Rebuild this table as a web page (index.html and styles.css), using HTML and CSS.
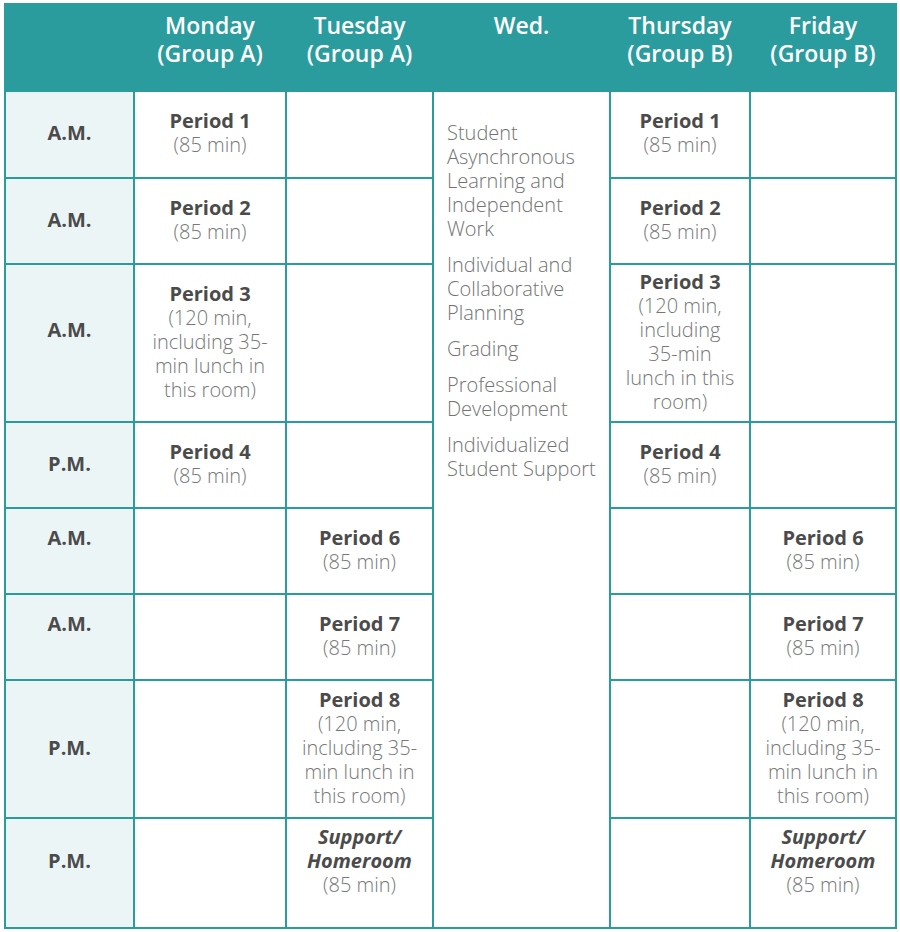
FILE: index.html
```html
<!DOCTYPE html>
<html lang="en">
<head>
<meta charset="utf-8">
<title>Hybrid Schedule</title>
<link rel="stylesheet" href="styles.css">
</head>
<body>
<div class="schedule">
  <div class="head"></div>
  <div class="head">Monday<br>(Group A)</div>
  <div class="head">Tuesday<br>(Group A)</div>
  <div class="head">Wed.</div>
  <div class="head">Thursday<br>(Group B)</div>
  <div class="head">Friday<br>(Group B)</div>

  <!-- row 1 -->
  <div class="label">A.M.</div>
  <div class="cell"><b>Period 1</b><span>(85 min)</span></div>
  <div class="cell"></div>
  <div class="wed">
    <p>Student<br>Asynchronous<br>Learning and<br>Independent<br>Work</p>
    <p>Individual and<br>Collaborative<br>Planning</p>
    <p>Grading</p>
    <p>Professional<br>Development</p>
    <p>Individualized<br>Student Support</p>
  </div>
  <div class="cell"><b>Period 1</b><span>(85 min)</span></div>
  <div class="cell"></div>

  <!-- row 2 -->
  <div class="label">A.M.</div>
  <div class="cell"><b>Period 2</b><span>(85 min)</span></div>
  <div class="cell"></div>
  <div class="cell"><b>Period 2</b><span>(85 min)</span></div>
  <div class="cell"></div>

  <!-- row 3 -->
  <div class="label lift">A.M.</div>
  <div class="cell"><b>Period 3</b><span>(120 min,<br>including 35-<br>min lunch in<br>this room)</span></div>
  <div class="cell"></div>
  <div class="cell"><b>Period 3</b><span>(120 min,<br>including<br>35-min<br>lunch in this<br>room)</span></div>
  <div class="cell"></div>

  <!-- row 4 -->
  <div class="label">P.M.</div>
  <div class="cell"><b>Period 4</b><span>(85 min)</span></div>
  <div class="cell"></div>
  <div class="cell"><b>Period 4</b><span>(85 min)</span></div>
  <div class="cell"></div>

  <!-- row 5 -->
  <div class="label lift">A.M.</div>
  <div class="cell"></div>
  <div class="cell"><b>Period 6</b><span>(85 min)</span></div>
  <div class="cell"></div>
  <div class="cell"><b>Period 6</b><span>(85 min)</span></div>

  <!-- row 6 -->
  <div class="label lift">A.M.</div>
  <div class="cell"></div>
  <div class="cell"><b>Period 7</b><span>(85 min)</span></div>
  <div class="cell"></div>
  <div class="cell"><b>Period 7</b><span>(85 min)</span></div>

  <!-- row 7 -->
  <div class="label">P.M.</div>
  <div class="cell"></div>
  <div class="cell"><b>Period 8</b><span>(120 min,<br>including 35-<br>min lunch in<br>this room)</span></div>
  <div class="cell"></div>
  <div class="cell"><b>Period 8</b><span>(120 min,<br>including 35-<br>min lunch in<br>this room)</span></div>

  <!-- row 8 -->
  <div class="label lift-sm">P.M.</div>
  <div class="cell"></div>
  <div class="cell lift-sm"><b><i>Support/<br>Homeroom</i></b><span>(85 min)</span></div>
  <div class="cell"></div>
  <div class="cell lift-sm"><b><i>Support/<br>Homeroom</i></b><span>(85 min)</span></div>
</div>
</body>
</html>
```

FILE: styles.css
```css
html, body {
  margin: 0;
  padding: 0;
  background: #ffffff;
}

body {
  font-family: "Open Sans", "Liberation Sans", sans-serif;
}

.schedule {
  margin: 3px 0 0 4px;
  width: 893px;
  box-sizing: border-box;
  display: grid;
  grid-template-columns: 127px 150px 145px 175px 138px 144px;
  grid-template-rows: 85px 85px 84px 156px 84px 84px 84px 136px 108px;
  gap: 2px;
  padding: 2px;
  background: #2b9c9e;
}

.head {
  background: #2b9c9e;
  color: #ffffff;
  font-size: 23px;
  font-weight: 600;
  line-height: 28px;
  text-align: center;
  padding-top: 6px;
}

.label {
  background: #ebf5f6;
  color: #4b4b4b;
  font-size: 20px;
  font-weight: 700;
  display: flex;
  align-items: center;
  justify-content: center;
  line-height: 24px;
  padding-bottom: 3px;
}

.cell {
  background: #ffffff;
  display: flex;
  flex-direction: column;
  align-items: center;
  justify-content: center;
  text-align: center;
  font-size: 20px;
  line-height: 24px;
  padding-bottom: 3px;
}

.cell b {
  color: #4b4b4b;
  font-weight: 700;
}

.cell span {
  color: #777777;
  font-weight: 300;
}

.label.lift {
  padding-bottom: 27px;
}

.label.lift-sm,
.cell.lift-sm {
  padding-bottom: 24px;
}

.wed {
  grid-row: 2 / 10;
  grid-column: 4;
  background: #ffffff;
  padding: 29px 8px 0 13px;
  color: #737373;
  font-size: 20px;
  line-height: 24px;
  font-weight: 300;
}

.wed p {
  margin: 0 0 12px;
}
```
